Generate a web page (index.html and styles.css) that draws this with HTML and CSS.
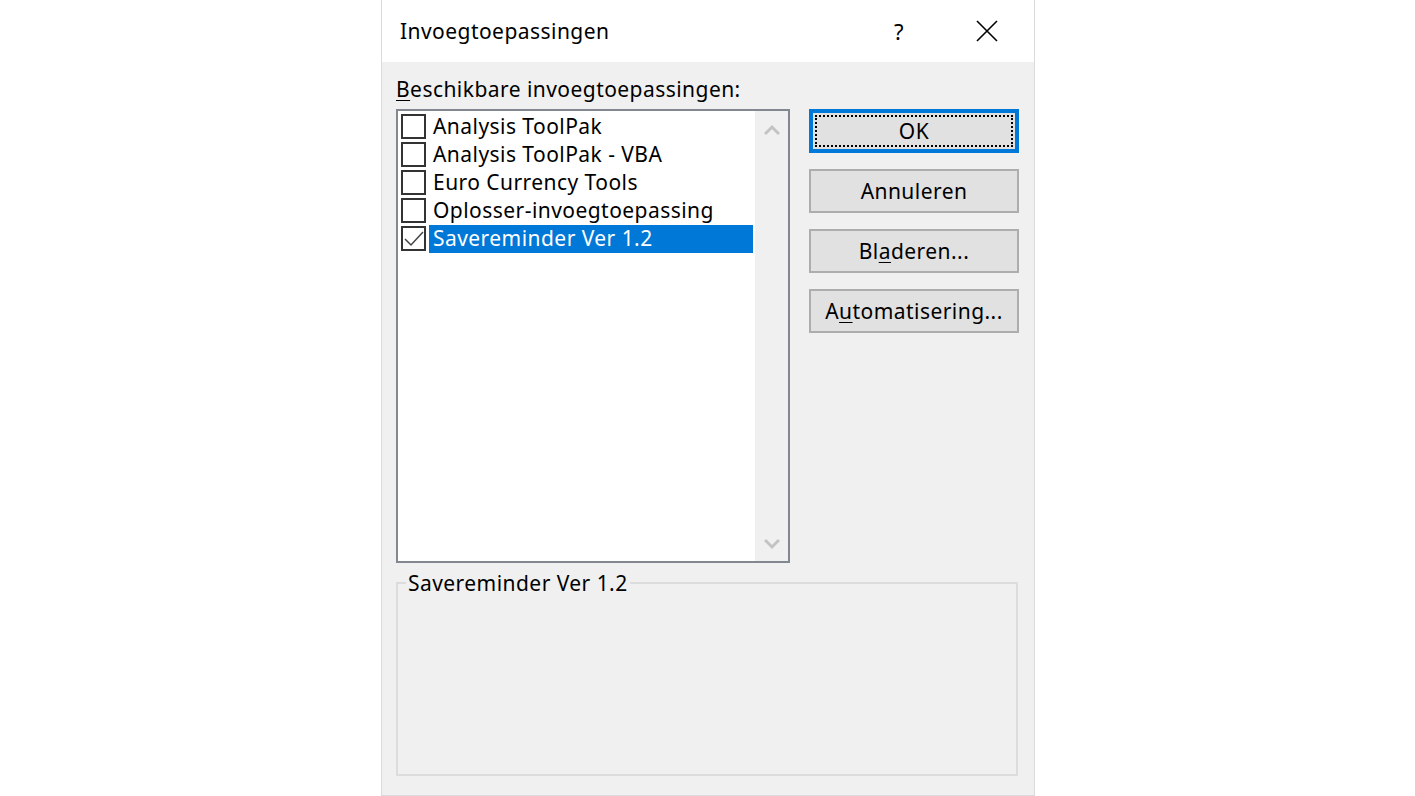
FILE: index.html
```html
<!DOCTYPE html>
<html lang="nl">
<head>
<meta charset="utf-8">
<title>Invoegtoepassingen</title>
<link rel="stylesheet" href="styles.css">
</head>
<body>
<div class="dialog">
  <div class="titlebar">
    <span class="title">Invoegtoepassingen</span>
    <span class="help">?</span>
    <span class="close">
      <svg width="22" height="22" viewBox="0 0 22 22"><path d="M1 1 L21 21 M21 1 L1 21" stroke="#000" stroke-width="1.6" fill="none"/></svg>
    </span>
  </div>
  <div class="content">
    <div class="top">
      <div class="left">
        <div class="label"><u>B</u>eschikbare invoegtoepassingen:</div>
        <div class="listbox">
          <ul class="items">
            <li class="item"><span class="cb"></span><span class="txt">Analysis ToolPak</span></li>
            <li class="item"><span class="cb"></span><span class="txt">Analysis ToolPak - VBA</span></li>
            <li class="item"><span class="cb"></span><span class="txt">Euro Currency Tools</span></li>
            <li class="item"><span class="cb"></span><span class="txt">Oplosser-invoegtoepassing</span></li>
            <li class="item"><span class="cb checked"><svg width="21" height="21" viewBox="0 0 21 21"><path d="M2 11 L8 17 L20 4" stroke="#444" stroke-width="1.5" fill="none"/></svg></span><span class="txt selected">Savereminder Ver 1.2</span></li>
          </ul>
          <div class="scrollbar">
            <svg class="arrow" width="16" height="12" viewBox="0 0 16 12"><path d="M1 10 L8 3 L15 10" stroke="#c3c3c3" stroke-width="3" fill="none"/></svg>
            <svg class="arrow" width="16" height="12" viewBox="0 0 16 12"><path d="M1 2 L8 9 L15 2" stroke="#c3c3c3" stroke-width="3" fill="none"/></svg>
          </div>
        </div>
      </div>
      <div class="buttons">
        <button class="btn default"><span class="focus">OK</span></button>
        <button class="btn">Annuleren</button>
        <button class="btn">Bl<u>a</u>deren...</button>
        <button class="btn">A<u>u</u>tomatisering...</button>
      </div>
    </div>
    <fieldset class="group">
      <legend>Savereminder Ver 1.2</legend>
    </fieldset>
  </div>
</div>
</body>
</html>
```

FILE: styles.css
```css
html, body {
  margin: 0;
  padding: 0;
  background: #ffffff;
}
body {
  font-family: "Noto Sans", "Open Sans", sans-serif;
  font-size: 21px;
  letter-spacing: 0.45px;
  color: #000;
}
.dialog {
  margin-left: 381px;
  width: 652px;
  height: 795px;
  border-left: 1px solid #dadada;
  border-right: 1px solid #dadada;
  border-bottom: 1px solid #dadada;
  background: #f0f0f0;
  display: flex;
  flex-direction: column;
}
.titlebar {
  height: 62px;
  background: #ffffff;
  display: flex;
  align-items: center;
  padding-left: 18px;
}
.title {
  flex: 1;
  font-size: 21px;
  padding-bottom: 1px;
}
.help {
  font-size: 22px;
  width: 30px;
  margin-right: 62px;
  text-align: center;
}
.close {
  width: 22px;
  height: 22px;
  margin-right: 36px;
  display: flex;
}
.content {
  padding: 14px 16px 0 14px;
  display: flex;
  flex-direction: column;
}
.top {
  display: flex;
  gap: 19px;
}
.left {
  display: flex;
  flex-direction: column;
}
.label {
  height: 28px;
  line-height: 26px;
  margin-bottom: 5px;
}
.label u, .btn u {
  text-decoration-thickness: 1px;
  text-underline-offset: 3px;
}
.listbox {
  width: 390px;
  height: 450px;
  border: 2px solid #828790;
  display: flex;
  background: #ffffff;
}
.items {
  list-style: none;
  margin: 0;
  padding: 2px 0 0 3px;
  flex: 1;
}
.item {
  height: 28px;
  display: flex;
  align-items: flex-start;
}
.cb {
  width: 21px;
  height: 21px;
  border: 2px solid #333333;
  background: #ffffff;
  margin-top: 1px;
  display: flex;
}
.txt {
  margin-left: 3px;
  padding-left: 4px;
  height: 28px;
  line-height: 27px;
  white-space: nowrap;
}
.txt.selected {
  background: #0078d7;
  color: #ffffff;
  width: 320px;
}
.scrollbar {
  width: 33px;
  background: #f0f0f0;
  display: flex;
  flex-direction: column;
  justify-content: space-between;
  align-items: center;
  padding: 13px 0 11px;
  box-sizing: border-box;
}
.buttons {
  display: flex;
  flex-direction: column;
  gap: 16px;
  padding-top: 33px;
}
.btn {
  width: 210px;
  height: 44px;
  background: #e1e1e1;
  border: 2px solid #adadad;
  font-family: inherit;
  font-size: 21px;
  letter-spacing: 0.45px;
  color: #000;
  padding: 0;
  display: flex;
  align-items: center;
  justify-content: center;
}
.btn.default {
  border: 4px solid #0078d7;
  padding: 2px;
}
.focus {
  flex: 1;
  align-self: stretch;
  border: 2px dotted #000;
  display: flex;
  align-items: center;
  justify-content: center;
}
.group {
  margin: 9px 0 0 0;
  padding: 0;
  width: 622px;
  height: 204px;
  box-sizing: border-box;
  border: 2px solid #dcdcdc;
}
.group legend {
  margin-left: 8px;
  padding: 0 2px;
  line-height: 22px;
}
```
